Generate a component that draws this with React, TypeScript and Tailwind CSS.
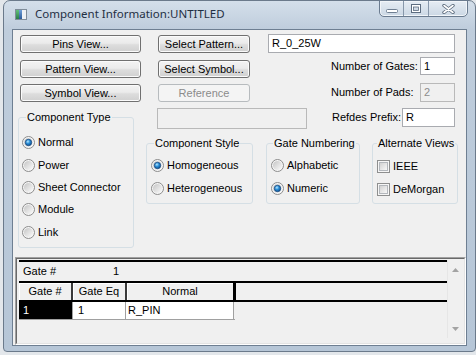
import React from 'react';

const dlg = "font-['Liberation_Sans',Arial,sans-serif] text-[11px] leading-[13px] text-black";

function Button({ label, w, disabled }: { label: string; w: string; disabled?: boolean }) {
  return (
    <div
      className={`${w} h-[18px] shrink-0 flex items-center justify-center rounded-[3px] border ${
        disabled
          ? 'border-[#b7bbbe] bg-[#f4f4f4] text-[#8b8b8b]'
          : 'border-[#707070] bg-[linear-gradient(#f3f3f3,#ebebeb_45%,#dddddd_55%,#d0d0d0)] shadow-[inset_0_0_0_1px_#fbfbfb]'
      }`}
    >
      {label}
    </div>
  );
}

function TextBox({ value, w, h, disabled }: { value?: string; w: string; h: string; disabled?: boolean }) {
  return (
    <div
      className={`${w} ${h} shrink-0 flex items-center pl-[3px] border ${
        disabled ? 'border-[#b9b9b9] bg-[#f0f0f0] text-[#8d8d8d]' : 'border-[#a9abb0] bg-white'
      }`}
    >
      {value}
    </div>
  );
}

function Radio({ on }: { on?: boolean }) {
  return (
    <svg width="13" height="13" viewBox="0 0 13 13" className="shrink-0">
      <defs>
        <linearGradient id="radioFill" x1="0" y1="0" x2="1" y2="1">
          <stop offset="0" stopColor="#c4c4c4" />
          <stop offset="1" stopColor="#fcfcfc" />
        </linearGradient>
        <radialGradient id="radioDot" cx="0.4" cy="0.35" r="0.7">
          <stop offset="0" stopColor="#b5e8ff" />
          <stop offset="0.45" stopColor="#2c8fd8" />
          <stop offset="1" stopColor="#0b4a87" />
        </radialGradient>
      </defs>
      <circle cx="6.5" cy="6.5" r="6" fill="#f6f6f6" stroke="#8c8c8c" />
      <circle cx="6.5" cy="6.5" r="4.6" fill="url(#radioFill)" />
      {on && <circle cx="6.5" cy="6.5" r="3.2" fill="url(#radioDot)" stroke="#1a4a80" strokeWidth="0.8" />}
    </svg>
  );
}

function Check() {
  return (
    <svg width="13" height="13" viewBox="0 0 13 13" className="shrink-0">
      <defs>
        <linearGradient id="checkFill" x1="0" y1="0" x2="1" y2="1">
          <stop offset="0" stopColor="#cfcfcf" />
          <stop offset="1" stopColor="#fbfbfb" />
        </linearGradient>
      </defs>
      <rect x="0.5" y="0.5" width="12" height="12" fill="#f6f6f6" stroke="#8e8f8f" />
      <rect x="2.5" y="2.5" width="8" height="8" fill="url(#checkFill)" stroke="#b3b7bc" />
    </svg>
  );
}

function Option({ label, on, h, check }: { label: string; on?: boolean; h: string; check?: boolean }) {
  return (
    <div className={`flex items-center ${h}`}>
      {check ? <Check /> : <Radio on={on} />}
      <span className="ml-[3px] whitespace-nowrap">{label}</span>
    </div>
  );
}

function Group({ title, cls, lm, children }: { title: string; cls: string; lm: string; children: React.ReactNode }) {
  return (
    <fieldset className={`${cls} shrink-0 rounded-[3px] border border-[#d5dfe5]`}>
      <legend className={`${lm} px-[1px] leading-[13px] whitespace-nowrap`}>{title}</legend>
      {children}
    </fieldset>
  );
}

function TitleIcon() {
  return (
    <svg width="12" height="11" viewBox="0 0 12 11">
      <defs>
        <linearGradient id="iconL" x1="0" y1="0" x2="0" y2="1">
          <stop offset="0" stopColor="#62c07a" />
          <stop offset="1" stopColor="#2b7f47" />
        </linearGradient>
        <linearGradient id="iconM" x1="0" y1="0" x2="0" y2="1">
          <stop offset="0" stopColor="#6f9fd8" />
          <stop offset="1" stopColor="#2c5a98" />
        </linearGradient>
      </defs>
      <rect x="0.5" y="0.5" width="11" height="10" fill="#eef1f4" stroke="#7f8c99" />
      <rect x="1" y="1" width="3" height="9" fill="url(#iconL)" />
      <rect x="4" y="1" width="3" height="9" fill="url(#iconM)" />
    </svg>
  );
}

export default function App() {
  return (
    <div className="w-[476px] h-[355px] bg-[#e3e7eb] overflow-hidden">
      <div className="ml-[3px] w-[473px] h-[352px] rounded-t-[7px] rounded-b-[4px] border border-[#6b7a8b] bg-[linear-gradient(#d4dfea,#bfcddc_28px,#b6c6d7)] flex flex-col">
        {/* title bar */}
        <div className="h-[28px] flex items-start shrink-0">
          <div className="ml-[11px] mt-[8px]">
            <TitleIcon />
          </div>
          <div className="ml-[8px] mt-[5px] font-['Noto_Sans',sans-serif] text-[11.5px] leading-[16px] text-[#1f2f43]">
            Component Information:UNTITLED
          </div>
          <div className="ml-auto mr-[7px] -mt-px flex h-[17px] rounded-b-[5px] border border-[#6a7b8f] bg-[linear-gradient(#e6edf4,#cbd7e4)] shadow-[inset_0_0_0_1px_#f1f5f9] overflow-hidden">
            <div className="w-[24px] flex items-center justify-center border-r border-[#8797aa]">
              <svg width="12" height="4" viewBox="0 0 12 4" className="mt-[5px]">
                <rect x="0.5" y="0.5" width="11" height="3" rx="1" fill="#ffffff" stroke="#6f7f92" />
              </svg>
            </div>
            <div className="w-[25px] flex items-center justify-center border-r border-[#8797aa]">
              <svg width="10" height="9" viewBox="0 0 10 9">
                <rect x="0.5" y="0.5" width="9" height="8" fill="#ffffff" stroke="#5d6d80" />
                <rect x="2.5" y="3" width="5" height="3.5" fill="#cfd9e4" stroke="#5d6d80" strokeWidth="0.8" />
              </svg>
            </div>
            <div className="w-[38px] flex items-center justify-center">
              <svg width="13" height="10" viewBox="0 0 13 10">
                <path d="M2 1.5 L11 8.5 M11 1.5 L2 8.5" stroke="#5b6a7c" strokeWidth="3.4" strokeLinecap="round" />
                <path d="M2 1.5 L11 8.5 M11 1.5 L2 8.5" stroke="#ffffff" strokeWidth="1.6" strokeLinecap="round" />
              </svg>
            </div>
          </div>
        </div>

        {/* client */}
        <div className={`mx-[8px] h-[317px] shrink-0 border border-[#6e7f92] bg-[#f0f0f0] flex flex-col ${dlg}`}>
          <div className="mt-[5px] h-[25px] flex items-start">
            <div className="ml-[7px]">
              <Button label="Pins View..." w="w-[121px]" />
            </div>
            <div className="ml-[17px]">
              <Button label="Select Pattern..." w="w-[92px]" />
            </div>
            <div className="ml-[18px] -mt-px">
              <TextBox value="R_0_25W" w="w-[187px]" h="h-[19px]" />
            </div>
          </div>

          <div className="h-[24px] flex items-start">
            <div className="ml-[7px]">
              <Button label="Pattern View..." w="w-[121px]" />
            </div>
            <div className="ml-[17px]">
              <Button label="Select Symbol..." w="w-[92px]" />
            </div>
            <div className="ml-[81px] -mt-[3px] h-[18px] flex items-center">
              <span className="w-[89px]">Number of Gates:</span>
              <TextBox value="1" w="w-[35px]" h="h-[18px]" />
            </div>
          </div>

          <div className="h-[24px] flex items-start">
            <div className="ml-[7px]">
              <Button label="Symbol View..." w="w-[121px]" />
            </div>
            <div className="ml-[17px]">
              <Button label="Reference" w="w-[92px]" disabled />
            </div>
            <div className="ml-[81px] -mt-px h-[19px] flex items-center">
              <span className="w-[89px]">Number of Pads:</span>
              <TextBox value="2" w="w-[35px]" h="h-[19px]" disabled />
            </div>
          </div>

          <div className="flex items-start">
            <div className="ml-[5px] mt-[3px]">
              <Group title="Component Type" cls="w-[116px] h-[137px]" lm="ml-[7px]">
                <div className="pl-[3px] mt-[7px] flex flex-col">
                  <Option label="Normal" on h="h-[23px]" />
                  <Option label="Power" h="h-[23px]" />
                  <Option label="Sheet Connector" h="h-[21px]" />
                  <Option label="Module" h="h-[23px]" />
                  <Option label="Link" h="h-[23px]" />
                </div>
              </Group>
            </div>

            <div className="ml-[12px] flex flex-col">
              <div className="flex items-start">
                <div className="ml-[11px]">
                  <TextBox w="w-[150px]" h="h-[21px]" disabled />
                </div>
                <div className="ml-[25px] h-[19px] flex items-center">
                  <span className="w-[70px]">Refdes Prefix:</span>
                  <TextBox value="R" w="w-[53px]" h="h-[19px]" />
                </div>
              </div>

              <div className="mt-[8px] flex items-start">
                <Group title="Component Style" cls="w-[107px] h-[67px]" lm="ml-[7px]">
                  <div className="pl-[4px] mt-[4px] flex flex-col">
                    <Option label="Homogeneous" on h="h-[23px]" />
                    <Option label="Heterogeneous" h="h-[23px]" />
                  </div>
                </Group>
                <div className="ml-[13px]">
                  <Group title="Gate Numbering" cls="w-[94px] h-[67px]" lm="ml-[6px]">
                    <div className="pl-[4px] mt-[4px] flex flex-col">
                      <Option label="Alphabetic" h="h-[23px]" />
                      <Option label="Numeric" on h="h-[23px]" />
                    </div>
                  </Group>
                </div>
                <div className="ml-[12px]">
                  <Group title="Alternate Views" cls="w-[86px] h-[67px]" lm="ml-[4px]">
                    <div className="pl-[4px] mt-[5px] flex flex-col">
                      <Option label="IEEE" check h="h-[23px]" />
                      <Option label="DeMorgan" check h="h-[22px]" />
                    </div>
                  </Group>
                </div>
              </div>
            </div>
          </div>

          {/* gate grid */}
          <div className="ml-[2px] mt-[9px] h-[88px] border border-[#a0a0a0] border-r-white border-b-white">
            <div className="h-full border border-[#696969] border-r-[#e3e3e3] border-b-[#e3e3e3] pl-[2px] pt-px pr-px flex">
              <div className="w-[428px] flex flex-col">
                <div className="h-[2px] bg-black" />
                <div className="h-[19px] flex items-center">
                  <span className="ml-[4px] w-[90px]">Gate #</span>
                  <span>1</span>
                </div>
                <div className="h-[2px] bg-black" />
                <div className="h-[17px] flex">
                  <div className="w-[52px] flex items-center justify-center shadow-[inset_1px_1px_0_#ffffff]">Gate #</div>
                  <div className="w-[2px] bg-[#3a3a3a]" />
                  <div className="w-[52px] flex items-center justify-center shadow-[inset_1px_1px_0_#ffffff]">Gate Eq</div>
                  <div className="w-[2px] bg-[#3a3a3a]" />
                  <div className="w-[106px] flex items-center justify-center shadow-[inset_1px_1px_0_#ffffff]">Normal</div>
                  <div className="w-[3px] bg-black" />
                  <div className="flex-1" />
                </div>
                <div className="h-[2px] bg-black" />
                <div className="h-[17px] flex">
                  <div className="w-[53px] bg-black text-white pl-[4px] flex items-center">1</div>
                  <div className="w-px bg-[#a0a0a0]" />
                  <div className="w-[52px] bg-white pl-[5px] flex items-center">1</div>
                  <div className="w-px bg-[#a0a0a0]" />
                  <div className="w-[107px] bg-white pl-[2px] flex items-center">R_PIN</div>
                  <div className="w-px bg-[#a0a0a0]" />
                </div>
                <div className="w-[216px] h-px bg-[#a0a0a0]" />
              </div>
              <div className="w-[16px] h-[78px] border-l border-[#e6e6e6] flex flex-col items-center justify-between pt-[8px] pb-[7px]">
                <svg width="7" height="4" viewBox="0 0 7 4">
                  <path d="M3.5 0 L7 4 L0 4 Z" fill="#a3a3a3" />
                </svg>
                <svg width="7" height="4" viewBox="0 0 7 4">
                  <path d="M0 0 L7 0 L3.5 4 Z" fill="#a3a3a3" />
                </svg>
              </div>
            </div>
          </div>
        </div>
      </div>
    </div>
  );
}
